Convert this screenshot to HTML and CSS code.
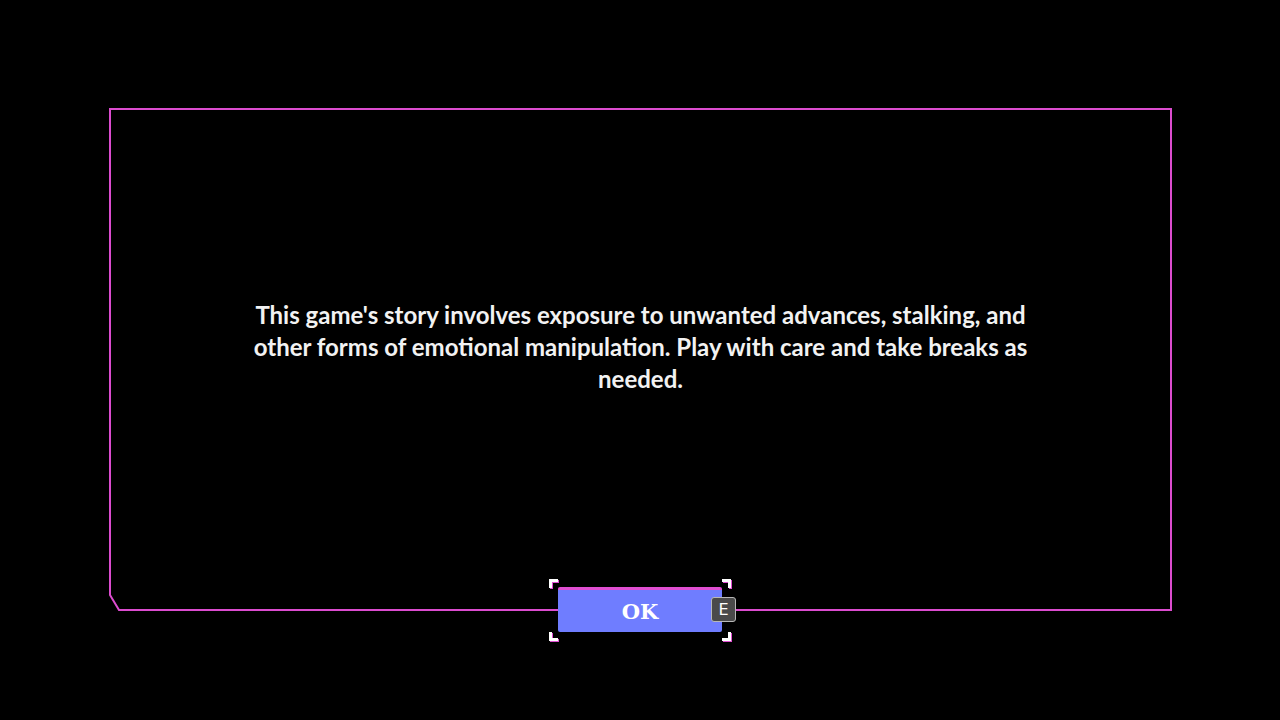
FILE: index.html
```html
<html>
  <head>
    <title>Content Warning</title>
    <link rel="stylesheet" href="styles.css">
  </head>

  <body>
    <div class="panel">
      <svg class="panel-edge" width="1063" height="503" viewBox="0 0 1063 503">
        <path d="M1 1 H1062 V502 H10 L1 487 Z" fill="none" stroke="#dc4ccf" stroke-width="2" />
      </svg>

      <p class="warning">
        This game's story involves exposure to unwanted advances, stalking, and
        other forms of emotional manipulation. Play with care and take breaks as
        needed.
      </p>

      <div class="confirm">
        <span class="corner tl"></span>
        <span class="corner tr"></span>
        <span class="corner bl"></span>
        <span class="corner br"></span>
        <button class="ok">OK</button>
        <span class="key">E</span>
      </div>
    </div>
  </body>
</html>
```

FILE: styles.css
```css
body {
  margin: 0;
  padding: 108px 108px 0 109px;
  background: #000;
  height: 720px;
  box-sizing: border-box;
  overflow: hidden;
}

.panel {
  position: relative;
  width: 1063px;
  height: 503px;
  display: flex;
  align-items: center;
  justify-content: center;
  padding-bottom: 25px;
  box-sizing: border-box;
}

.panel-edge {
  position: absolute;
  left: 0;
  top: 0;
}

.warning {
  margin: 0;
  max-width: 800px;
  text-align: center;
  color: #f2f2f2;
  font-family: Lato, "Open Sans", sans-serif;
  font-weight: 700;
  font-size: 24px;
  line-height: 32px;
}

/* OK button sitting on the bottom edge */
.confirm {
  position: absolute;
  left: 449px;
  top: 479px;
  width: 164px;
  height: 45px;
}

.ok {
  width: 164px;
  height: 45px;
  margin: 0;
  padding: 0;
  border: none;
  border-top: 3px solid #e04fd2;
  border-radius: 2px;
  background: #6f7dff;
  color: #fff;
  font-family: "DejaVu Serif", serif;
  font-weight: 700;
  font-size: 21px;
  cursor: pointer;
}

.key {
  position: absolute;
  left: 153px;
  top: 10px;
  width: 23px;
  height: 23px;
  border: 1px solid #b8b8b8;
  border-radius: 3px;
  background: #4a4a4a;
  color: #fff;
  font-family: "DejaVu Sans", sans-serif;
  font-size: 16px;
  line-height: 23px;
  text-align: center;
}

.corner {
  position: absolute;
  width: 6px;
  height: 6px;
  border: 3px solid #fff;
  filter: drop-shadow(1px 1px 0 #e04fd2);
}

.corner.tl {
  left: -9px;
  top: -8px;
  border-right: none;
  border-bottom: none;
}

.corner.tr {
  right: -9px;
  top: -8px;
  border-left: none;
  border-bottom: none;
}

.corner.bl {
  left: -9px;
  bottom: -9px;
  border-right: none;
  border-top: none;
}

.corner.br {
  right: -9px;
  bottom: -9px;
  border-left: none;
  border-top: none;
}
```
